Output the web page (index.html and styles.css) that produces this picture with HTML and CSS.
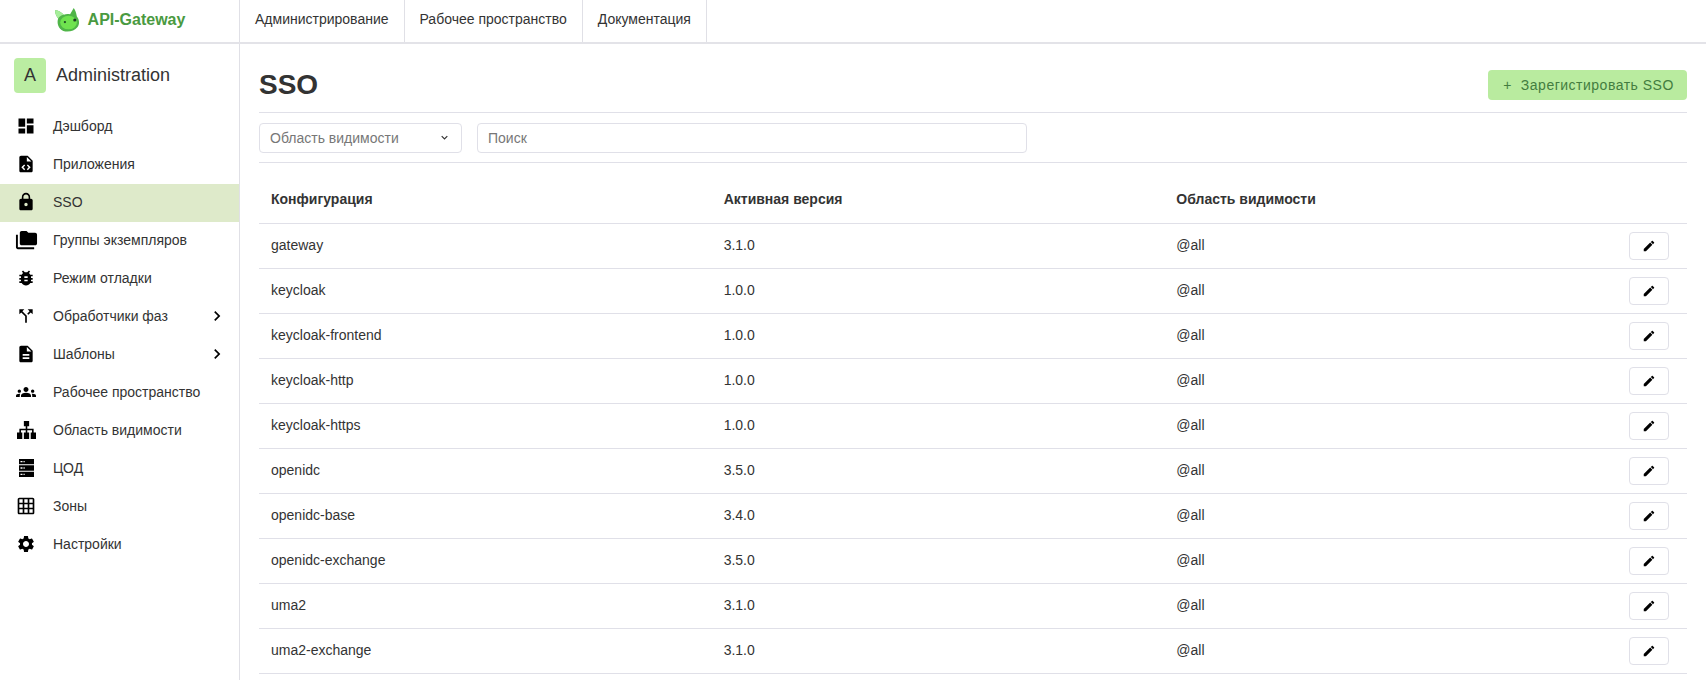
FILE: index.html
```html
<!DOCTYPE html>
<html lang="en">
<head>
    <meta charset="UTF-8">
    <meta name="viewport" content="width=device-width, initial-scale=1.0">
    <title>SSO</title>
    <link rel="stylesheet" href="styles.css">
</head>
<body>

<header class="topbar">
    <a class="brand">
        <svg class="brand-logo" viewBox="0 0 26 26" aria-hidden="true">
            <path d="M1 4c3 0 6 2 8.500 4.500 2-1 4-1 6-.5L19 2c1.500 2 2.500 5 3 8 2.500 3 3 7.500.5 10.500-2.500 3.500-9 5-13.500 3.500C4 22 2.500 16 4 12 2 9.500 1 7 1 4z" fill="#4fb548"/>
            <path d="M1 4c3 0 6 2 8.500 4.500-3 .5-4.500 2-5.500 3.500C2 9.500 1 7 1 4z" fill="#a6ee9a"/>
            <ellipse cx="14" cy="16" rx="8" ry="6.500" fill="#6fe34f"/>
            <circle cx="10.500" cy="15.500" r="1.100" fill="#1d4a25"/>
            <circle cx="20" cy="13.500" r="1.500" fill="#1d3a25"/>
        </svg>
        <span class="brand-name">API-Gateway</span>
    </a>
    <nav class="topnav">
        <a class="topnav-item">Администрирование</a>
        <a class="topnav-item">Рабочее пространство</a>
        <a class="topnav-item">Документация</a>
    </nav>
</header>

<div class="layout">
    <aside class="sidebar">
        <div class="workspace">
            <div class="workspace-avatar">A</div>
            <div class="workspace-name">Administration</div>
        </div>
        <ul class="menu">
            <li class="menu-item">
                <span class="menu-icon"><svg class="icon" viewBox="0 0 24 24"><path d="M3 13h8V3H3v10zm0 8h8v-6H3v6zm10 0h8V11h-8v10zm0-18v6h8V3h-8z"/></svg></span>
                <span class="menu-label">Дэшборд</span>
            </li>
            <li class="menu-item">
                <span class="menu-icon"><svg class="icon" viewBox="0 0 24 24"><path fill-rule="evenodd" d="M14 2H6c-1.100 0-2 .9-2 2v16c0 1.100.9 2 2 2h12c1.100 0 2-.9 2-2V8l-6-6zM13 9V3.500L18.500 9H13zM9.800 19.400 6.400 16l3.400-3.400 1.200 1.200L8.800 16l2.200 2.200zM14.200 19.400 13 18.200l2.200-2.200-2.200-2.200 1.200-1.200 3.400 3.400z"/></svg></span>
                <span class="menu-label">Приложения</span>
            </li>
            <li class="menu-item active">
                <span class="menu-icon"><svg class="icon" viewBox="0 0 24 24"><path d="M18 8h-1V6c0-2.760-2.240-5-5-5S7 3.240 7 6v2H6c-1.100 0-2 .9-2 2v10c0 1.100.9 2 2 2h12c1.100 0 2-.9 2-2V10c0-1.100-.9-2-2-2zm-6 9c-1.100 0-2-.9-2-2s.9-2 2-2 2 .9 2 2-.9 2-2 2zm3.100-9H8.900V6c0-1.710 1.390-3.100 3.100-3.100 1.710 0 3.100 1.390 3.100 3.100v2z"/></svg></span>
                <span class="menu-label">SSO</span>
            </li>
            <li class="menu-item">
                <span class="menu-icon"><svg class="icon icon-wide" viewBox="0 0 24 24"><path d="M3 19h17v2H3c-1.100 0-2-.9-2-2V6h2v13zM23 6v9c0 1.100-.9 2-2 2H7c-1.100 0-2-.9-2-2l.01-11c0-1.100.89-2 1.990-2h5l2 2h7c1.100 0 2 .9 2 2z"/></svg></span>
                <span class="menu-label">Группы экземпляров</span>
            </li>
            <li class="menu-item">
                <span class="menu-icon"><svg class="icon" viewBox="0 0 24 24"><path d="M20 8h-2.810c-.45-.78-1.070-1.450-1.820-1.960L17 4.410 15.590 3l-2.170 2.170C12.960 5.060 12.490 5 12 5c-.49 0-.96.06-1.410.17L8.410 3 7 4.410l1.620 1.630C7.880 6.550 7.260 7.220 6.810 8H4v2h2.090c-.05.33-.09.66-.09 1v1H4v2h2v1c0 .34.04.67.09 1H4v2h2.810c1.040 1.790 2.970 3 5.190 3s4.150-1.210 5.190-3H20v-2h-2.090c.05-.33.09-.66.09-1v-1h2v-2h-2v-1c0-.34-.04-.67-.09-1H20V8zm-6 8h-4v-2h4v2zm0-4h-4v-2h4v2z"/></svg></span>
                <span class="menu-label">Режим отладки</span>
            </li>
            <li class="menu-item">
                <span class="menu-icon"><svg class="icon" viewBox="0 0 24 24"><path d="M14 4l2.290 2.290-2.880 2.880 1.420 1.420 2.880-2.880L20 10V4zm-4 0H4v6l2.290-2.290 4.710 4.700V20h2v-8.410l-5.290-5.300z"/></svg></span>
                <span class="menu-label">Обработчики фаз</span>
                <svg class="menu-arrow" viewBox="0 0 24 24"><path d="M8.590 16.590 13.170 12 8.590 7.410 10 6l6 6-6 6z"/></svg>
            </li>
            <li class="menu-item">
                <span class="menu-icon"><svg class="icon" viewBox="0 0 24 24"><path d="M14 2H6c-1.100 0-1.990.9-1.990 2L4 20c0 1.100.89 2 1.990 2H18c1.100 0 2-.9 2-2V8l-6-6zm2 16H8v-2h8v2zm0-4H8v-2h8v2zm-3-5V3.500L18.500 9H13z"/></svg></span>
                <span class="menu-label">Шаблоны</span>
                <svg class="menu-arrow" viewBox="0 0 24 24"><path d="M8.590 16.590 13.170 12 8.590 7.410 10 6l6 6-6 6z"/></svg>
            </li>
            <li class="menu-item">
                <span class="menu-icon"><svg class="icon" viewBox="0 3 24 18"><path d="M12 12.750c1.630 0 3.070.39 4.240.9 1.080.48 1.760 1.560 1.760 2.730V18H6v-1.610c0-1.180.68-2.260 1.760-2.730 1.170-.52 2.610-.91 4.240-.91zM4 13c1.100 0 2-.9 2-2s-.9-2-2-2-2 .9-2 2 .9 2 2 2zm1.130 1.100c-.37-.06-.74-.1-1.130-.1-.99 0-1.930.21-2.780.58C.48 14.900 0 15.620 0 16.430V18h4.500v-1.610c0-.83.23-1.610.63-2.290zM20 13c1.100 0 2-.9 2-2s-.9-2-2-2-2 .9-2 2 .9 2 2 2zm4 3.430c0-.81-.48-1.530-1.220-1.850-.85-.37-1.790-.58-2.780-.58-.39 0-.76.04-1.130.1.4.68.63 1.460.63 2.290V18H24v-1.570zM12 12c1.660 0 3-1.340 3-3s-1.340-3-3-3-3 1.340-3 3 1.340 3 3 3z"/></svg></span>
                <span class="menu-label">Рабочее пространство</span>
            </li>
            <li class="menu-item">
                <span class="menu-icon"><svg class="icon icon-large" viewBox="0 0 18 18"><path d="M6.500 0h5v5h-1.750v2.250h6v3.750H18v6h-5v-6h1.250V8.750h-4.500V11H11.500v6h-5v-6h1.750V8.750h-4.500V11H5v6H0v-6h2.250V7.250h6V5H6.500z"/></svg></span>
                <span class="menu-label">Область видимости</span>
            </li>
            <li class="menu-item">
                <span class="menu-icon"><svg class="icon-server" viewBox="0 0 15 18"><path fill-rule="evenodd" d="M0 0h15v5.300H0zM0 6.350h15v5.300H0zM0 12.700h15V18H0zM1.500 2v1.300h2V2zM4.500 2v1.300h1.200V2zM1.500 8.350v1.300h2v-1.300zM4.500 8.350v1.300h1.200v-1.300zM1.500 14.700V16h2v-1.300zM4.500 14.700V16h1.200v-1.300z"/></svg></span>
                <span class="menu-label">ЦОД</span>
            </li>
            <li class="menu-item">
                <span class="menu-icon"><svg class="icon" viewBox="0 0 24 24"><path d="M20 2H4c-1.100 0-2 .9-2 2v16c0 1.100.9 2 2 2h16c1.100 0 2-.9 2-2V4c0-1.100-.9-2-2-2zM8 20H4v-4h4v4zm0-6H4v-4h4v4zm0-6H4V4h4v4zm6 12h-4v-4h4v4zm0-6h-4v-4h4v4zm0-6h-4V4h4v4zm6 12h-4v-4h4v4zm0-6h-4v-4h4v4zm0-6h-4V4h4v4z"/></svg></span>
                <span class="menu-label">Зоны</span>
            </li>
            <li class="menu-item">
                <span class="menu-icon"><svg class="icon" viewBox="0 0 24 24"><path d="M19.140 12.940c.04-.3.06-.61.06-.94 0-.32-.02-.64-.07-.94l2.030-1.580c.18-.14.23-.41.12-.61l-1.920-3.320c-.12-.22-.37-.29-.59-.22l-2.390.96c-.5-.38-1.030-.7-1.620-.94l-.36-2.540c-.04-.24-.24-.41-.48-.41h-3.840c-.24 0-.43.17-.47.41l-.36 2.540c-.59.24-1.130.57-1.620.94l-2.390-.96c-.22-.08-.47 0-.59.22L2.740 8.870c-.12.21-.08.47.12.61l2.030 1.580c-.05.3-.09.63-.09.94s.02.64.07.94l-2.030 1.580c-.18.14-.23.41-.12.61l1.920 3.320c.12.22.37.29.59.22l2.390-.96c.5.38 1.030.7 1.620.94l.36 2.540c.05.24.24.41.48.41h3.840c.24 0 .44-.17.47-.41l.36-2.540c.59-.24 1.130-.56 1.620-.94l2.390.96c.22.08.47 0 .59-.22l1.920-3.320c.12-.22.07-.47-.12-.61l-2.010-1.580zM12 15.600c-1.980 0-3.600-1.620-3.600-3.600s1.620-3.600 3.600-3.600 3.600 1.620 3.600 3.600-1.620 3.600-3.600 3.600z"/></svg></span>
                <span class="menu-label">Настройки</span>
            </li>
        </ul>
    </aside>

    <main class="content">
        <div class="page-head">
            <h1 class="page-title">SSO</h1>
            <button class="btn-primary"><span class="btn-plus">+</span>Зарегистировать SSO</button>
        </div>
        <div class="filters">
            <div class="select">
                <span>Область видимости</span>
                <svg class="select-arrow" viewBox="0 0 10 6"><path d="M1 1l4 4 4-4" fill="none" stroke="#333" stroke-width="1.700"/></svg>
            </div>
            <input class="search" type="text" placeholder="Поиск">
        </div>
        <table class="data-table">
            <thead>
                <tr>
                    <th>Конфигурация</th>
                    <th>Активная версия</th>
                    <th>Область видимости</th>
                    <th class="col-action"></th>
                </tr>
            </thead>
            <tbody id="rows"></tbody>
        </table>
    </main>
</div>

<script>
    const items = [
        ['gateway', '3.1.0'],
        ['keycloak', '1.0.0'],
        ['keycloak-frontend', '1.0.0'],
        ['keycloak-http', '1.0.0'],
        ['keycloak-https', '1.0.0'],
        ['openidc', '3.5.0'],
        ['openidc-base', '3.4.0'],
        ['openidc-exchange', '3.5.0'],
        ['uma2', '3.1.0'],
        ['uma2-exchange', '3.1.0']
    ];

    const editIcon = '<svg class="edit-icon" viewBox="0 0 24 24"><path d="M3 17.250V21h3.750L17.810 9.940l-3.750-3.750L3 17.250zM20.710 7.040c.39-.39.39-1.020 0-1.410l-2.340-2.340c-.39-.39-1.020-.39-1.410 0l-1.830 1.830 3.750 3.750 1.830-1.830z"/></svg>';

    document.getElementById('rows').innerHTML = items.map(item => `
        <tr>
            <td>${item[0]}</td>
            <td>${item[1]}</td>
            <td>@all</td>
            <td class="col-action"><button class="btn-edit">${editIcon}</button></td>
        </tr>`).join('');
</script>

</body>
</html>
```

FILE: styles.css
```css
* {
    box-sizing: border-box;
}
html, body {
    height: 100%;
}
body {
    margin: 0;
    overflow: hidden;
    font-family: "Liberation Sans", Arial, sans-serif;
    font-size: 14px;
    color: #333;
    background-color: #fff;
}
.topbar {
    display: flex;
    height: 44px;
    border-bottom: 2px solid #e3e3e8;
}
.brand {
    display: flex;
    align-items: center;
    justify-content: center;
    gap: 7px;
    width: 240px;
    border-right: 1px solid #e0e0e6;
    padding-bottom: 3px;
}
.brand-logo {
    width: 27px;
    height: 27px;
}
.brand-name {
    font-size: 16px;
    font-weight: bold;
    color: #4a9a41;
}
.topnav {
    display: flex;
}
.topnav-item {
    display: flex;
    align-items: center;
    padding: 0 15px;
    border-right: 1px solid #e0e0e6;
    padding-bottom: 4px;
}
.layout {
    display: flex;
    height: 636px;
}
.sidebar {
    width: 240px;
    flex-shrink: 0;
    border-right: 1px solid #e0e0e6;
}
.workspace {
    display: flex;
    align-items: center;
    gap: 10px;
    padding: 14px 14px 15px;
}
.workspace-avatar {
    display: flex;
    align-items: center;
    justify-content: center;
    width: 32px;
    height: 35px;
    border-radius: 4px;
    background-color: #bbeda2;
    font-size: 18px;
}
.workspace-name {
    font-size: 18px;
}
.menu {
    list-style-type: none;
    margin: 0;
    padding: 0;
}
.menu-item {
    position: relative;
    display: flex;
    align-items: center;
    height: 38px;
    padding-bottom: 2px;
}
.menu-item.active {
    background-color: #deeaca;
}
.menu-icon {
    display: flex;
    align-items: center;
    justify-content: center;
    width: 53px;
    padding-right: 1px;
}
.icon {
    width: 20px;
    height: 20px;
    fill: #000;
}
.icon-wide {
    width: 23px;
    height: 23px;
}
.icon-large {
    width: 19px;
    height: 19px;
}
.icon-server {
    width: 15px;
    height: 18px;
    fill: #000;
}
.menu-arrow {
    position: absolute;
    left: 207px;
    top: 8px;
    width: 20px;
    height: 20px;
    fill: #000;
}
.content {
    flex: 1;
    padding: 0 19px;
    overflow: hidden;
}
.page-head {
    display: flex;
    align-items: center;
    justify-content: space-between;
    height: 69px;
    border-bottom: 1px solid #e0e0e8;
    padding-top: 14px;
}
.page-title {
    margin: 0;
    font-size: 28px;
    font-weight: bold;
}
.btn-primary {
    height: 30px;
    width: 199px;
    border: none;
    border-radius: 4px;
    background-color: #b9eb9f;
    color: #437d40;
    font-family: inherit;
    font-size: 14px;
    letter-spacing: 0.5px;
    padding: 0 0 0 2px;
}
.btn-plus {
    margin-right: 9px;
}
.filters {
    display: flex;
    align-items: center;
    gap: 15px;
    height: 50px;
    border-bottom: 1px solid #e0e0e8;
}
.select {
    display: flex;
    align-items: center;
    justify-content: space-between;
    width: 203px;
    height: 30px;
    padding: 0 13px 0 10px;
    border: 1px solid #e0e0e8;
    border-radius: 4px;
    color: #777;
}
.select-arrow {
    width: 7px;
    height: 5px;
}
.search {
    width: 550px;
    height: 30px;
    padding: 0 10px;
    border: 1px solid #e0e0e8;
    border-radius: 4px;
    font-family: inherit;
    font-size: 14px;
}
.search::placeholder {
    color: #777;
}
.data-table {
    width: 100%;
    border-collapse: collapse;
    table-layout: fixed;
}
.data-table th {
    height: 60px;
    padding: 13px 0 0 12px;
    text-align: left;
    font-weight: bold;
    border-bottom: 1px solid #e0e0e8;
}
.data-table td {
    height: 45px;
    padding: 0 0 2px 12px;
    border-bottom: 1px solid #e0e0e8;
}
.data-table .col-action {
    width: 70px;
    padding: 0 0 0 12px;
}
.btn-edit {
    display: flex;
    align-items: center;
    justify-content: center;
    width: 40px;
    height: 28px;
    padding: 0;
    border: 1px solid #e0e0e8;
    border-radius: 4px;
    background-color: #fff;
}
.edit-icon {
    width: 14px;
    height: 14px;
    fill: #000;
}
```
